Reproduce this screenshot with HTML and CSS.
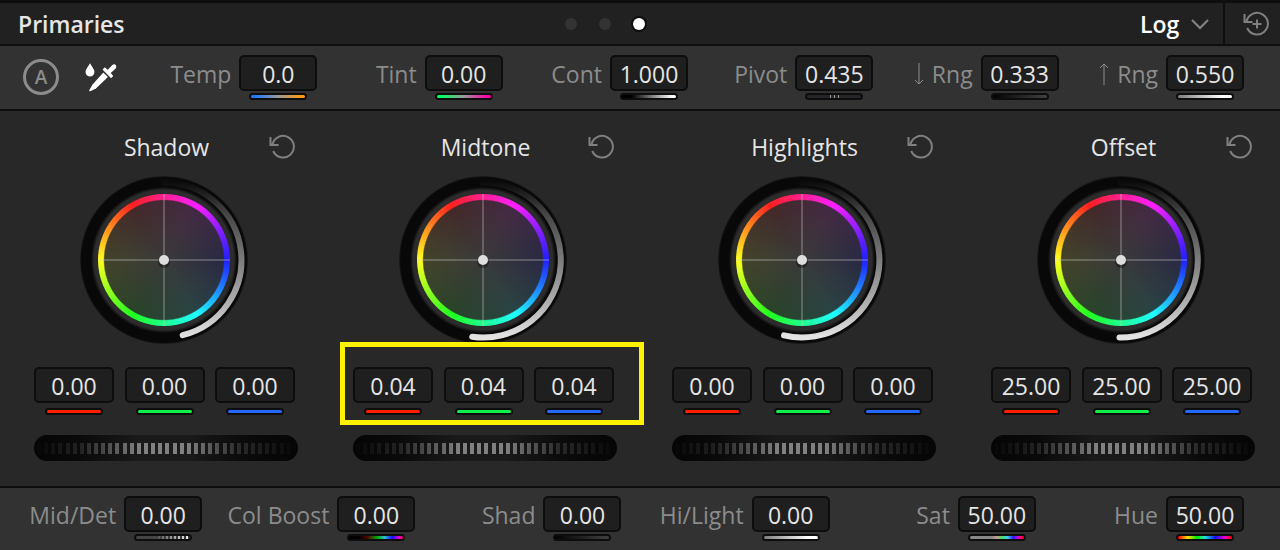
FILE: index.html
```html
<!DOCTYPE html>
<html lang="en">
<head>
  <meta charset="UTF-8" />
  <meta name="viewport" content="width=device-width, initial-scale=1" />
  <title>Primaries</title>
  <link rel="stylesheet" href="styles.css">
</head>
<body>
  <!-- Shared icons -->
  <svg class="defs" width="0" height="0" aria-hidden="true">
    <defs>
      <linearGradient id="arcFade" gradientUnits="userSpaceOnUse" x1="0" y1="6" x2="0" y2="162">
        <stop offset="0" stop-color="#0b0b0b" />
        <stop offset="0.2" stop-color="#444" />
        <stop offset="0.5" stop-color="#7c7c7c" />
        <stop offset="0.8" stop-color="#b4b4b4" />
        <stop offset="1" stop-color="#e4e4e4" />
      </linearGradient>
      <symbol id="reset" viewBox="0 0 26 26">
        <path d="M1.500 3v8h8M3.500 10.500A10.800 10.800 0 1 1 4.200 17" />
      </symbol>
      <symbol id="cross" viewBox="0 0 168 168">
        <path d="M84 18v132M18 84h132" stroke="#c8c8c8" stroke-opacity=".6" />
        <circle cx="84" cy="86" r="6" fill="#000" fill-opacity=".35" />
        <circle cx="84" cy="84" r="5" fill="#dedede" />
      </symbol>
    </defs>
  </svg>

  <header class="topbar">
    <h1>Primaries</h1>
    <nav class="dots">
      <button type="button" aria-label="Page 1"></button>
      <button type="button" aria-label="Page 2"></button>
      <button type="button" class="active" aria-label="Page 3"></button>
    </nav>
    <div class="topbar-right">
      <div class="mode">
        <select aria-label="Mode"><option>Log</option></select>
        <svg width="20" height="12" viewBox="0 0 20 12"><path d="M2 2l8 8 8-8" /></svg>
      </div>
      <button type="button" class="reset-all" aria-label="Reset all">
        <svg class="icon" width="26" height="26" viewBox="0 0 26 26"><use href="#reset" /><path d="M14 8.500v9M9.500 13h9" /></svg>
      </button>
    </div>
  </header>

  <section class="bar">
    <div class="tools">
      <button type="button" class="auto">A</button>
      <button type="button" class="picker" aria-label="Color picker">
        <svg width="34" height="32" viewBox="0 0 34 32">
          <path d="M6 2C8 6 10.500 8 10.500 11a4.500 4.500 0 0 1-9 0C1.500 8 4 6 6 2z" />
          <path d="M18.500 8.500l2.300-2.300 3 2.600 4.200-4.600c2.600-2.600 6 .8 3.500 3.500l-4.700 4.300 2.500 3-2.300 2.200z" />
          <path d="M19.300 11.500l4.700 4.600L12 27.500l-6 3-1-1L8.500 23.500z" />
        </svg>
      </button>
    </div>
    <div class="fields">
      <div class="field"><label for="temp">Temp</label><div class="value"><input id="temp" type="text" value="0.0"><span class="swatch temp"></span></div></div>
      <div class="field"><label for="tint">Tint</label><div class="value"><input id="tint" type="text" value="0.00"><span class="swatch tint"></span></div></div>
      <div class="field"><label for="cont">Cont</label><div class="value"><input id="cont" type="text" value="1.000"><span class="swatch cont"></span></div></div>
      <div class="field"><label for="pivot">Pivot</label><div class="value"><input id="pivot" type="text" value="0.435"><span class="swatch pivot"></span></div></div>
      <div class="field">
        <label for="lowRng"><svg width="12" height="24" viewBox="0 0 12 24"><path d="M6 1v21M2 18l4 4 4-4" /></svg>Rng</label>
        <div class="value"><input id="lowRng" type="text" value="0.333"><span class="swatch dark"></span></div>
      </div>
      <div class="field">
        <label for="highRng"><svg width="12" height="24" viewBox="0 0 12 24"><path d="M6 23V2M2 6l4-4 4 4" /></svg>Rng</label>
        <div class="value"><input id="highRng" type="text" value="0.550"><span class="swatch light"></span></div>
      </div>
    </div>
  </section>

  <main class="wheels">
    <section class="wheel-col">
      <div class="wheel-head">
        <h2>Shadow</h2>
        <button type="button" aria-label="Reset Shadow"><svg class="icon" width="26" height="26"><use href="#reset" /></svg></button>
      </div>
      <div class="wheel">
        <div class="hue"></div>
        <svg width="168" height="168" viewBox="0 0 168 168">
          <path class="arc" d="M84 6.500A77.500 77.500 0 0 1 102.700 159.200" />
          <use href="#cross" />
        </svg>
      </div>
      <div class="rgb">
        <div class="value"><input type="text" value="0.00" aria-label="Shadow red"><span class="swatch red"></span></div>
        <div class="value"><input type="text" value="0.00" aria-label="Shadow green"><span class="swatch green"></span></div>
        <div class="value"><input type="text" value="0.00" aria-label="Shadow blue"><span class="swatch blue"></span></div>
      </div>
      <input class="jog" type="range" aria-label="Shadow master">
    </section>

    <section class="wheel-col">
      <div class="wheel-head">
        <h2>Midtone</h2>
        <button type="button" aria-label="Reset Midtone"><svg class="icon" width="26" height="26"><use href="#reset" /></svg></button>
      </div>
      <div class="wheel">
        <div class="hue"></div>
        <svg width="168" height="168" viewBox="0 0 168 168">
          <path class="arc" d="M84 6.500A77.500 77.500 0 1 1 73.200 160.700" />
          <use href="#cross" />
        </svg>
      </div>
      <div class="rgb marked">
        <div class="value"><input type="text" value="0.04" aria-label="Midtone red"><span class="swatch red"></span></div>
        <div class="value"><input type="text" value="0.04" aria-label="Midtone green"><span class="swatch green"></span></div>
        <div class="value"><input type="text" value="0.04" aria-label="Midtone blue"><span class="swatch blue"></span></div>
      </div>
      <input class="jog" type="range" aria-label="Midtone master">
    </section>

    <section class="wheel-col">
      <div class="wheel-head">
        <h2>Highlights</h2>
        <button type="button" aria-label="Reset Highlights"><svg class="icon" width="26" height="26"><use href="#reset" /></svg></button>
      </div>
      <div class="wheel">
        <div class="hue"></div>
        <svg width="168" height="168" viewBox="0 0 168 168">
          <path class="arc" d="M84 6.500A77.500 77.500 0 1 1 66 159.400" />
          <use href="#cross" />
        </svg>
      </div>
      <div class="rgb">
        <div class="value"><input type="text" value="0.00" aria-label="Highlights red"><span class="swatch red"></span></div>
        <div class="value"><input type="text" value="0.00" aria-label="Highlights green"><span class="swatch green"></span></div>
        <div class="value"><input type="text" value="0.00" aria-label="Highlights blue"><span class="swatch blue"></span></div>
      </div>
      <input class="jog" type="range" aria-label="Highlights master">
    </section>

    <section class="wheel-col">
      <div class="wheel-head">
        <h2>Offset</h2>
        <button type="button" aria-label="Reset Offset"><svg class="icon" width="26" height="26"><use href="#reset" /></svg></button>
      </div>
      <div class="wheel">
        <div class="hue"></div>
        <svg width="168" height="168" viewBox="0 0 168 168">
          <path class="arc" d="M84 6.500A77.500 77.500 0 1 1 82.500 161.500" />
          <use href="#cross" />
        </svg>
      </div>
      <div class="rgb">
        <div class="value"><input type="text" value="25.00" aria-label="Offset red"><span class="swatch red"></span></div>
        <div class="value"><input type="text" value="25.00" aria-label="Offset green"><span class="swatch green"></span></div>
        <div class="value"><input type="text" value="25.00" aria-label="Offset blue"><span class="swatch blue"></span></div>
      </div>
      <input class="jog" type="range" aria-label="Offset master">
    </section>
  </main>

  <footer class="bar bottom">
    <div class="fields">
      <div class="field"><label for="midDet">Mid/Det</label><div class="value"><input id="midDet" type="text" value="0.00"><span class="swatch detail"></span></div></div>
      <div class="field"><label for="colBoost">Col Boost</label><div class="value"><input id="colBoost" type="text" value="0.00"><span class="swatch boost"></span></div></div>
      <div class="field"><label for="shad">Shad</label><div class="value"><input id="shad" type="text" value="0.00"><span class="swatch dark"></span></div></div>
      <div class="field"><label for="hiLight">Hi/Light</label><div class="value"><input id="hiLight" type="text" value="0.00"><span class="swatch light"></span></div></div>
      <div class="field"><label for="sat">Sat</label><div class="value"><input id="sat" type="text" value="50.00"><span class="swatch sat"></span></div></div>
      <div class="field"><label for="hue">Hue</label><div class="value"><input id="hue" type="text" value="50.00"><span class="swatch rainbow"></span></div></div>
    </div>
  </footer>
</body>
</html>
```
FILE: styles.css
```css
* {
  box-sizing: border-box;
}
body {
  margin: 0;
  min-height: 100vh;
  display: flex;
  flex-direction: column;
  background: #282828;
  color: #e6e6e6;
  font-family: "Open Sans", "Noto Sans", sans-serif;
  font-size: 23px;
  line-height: 32px;
}
h1, h2 {
  margin: 0;
  font-size: 23px;
}
button, input, select {
  margin: 0;
  padding: 0;
  border: none;
  background: none;
  color: inherit;
  font: inherit;
}
button {
  cursor: pointer;
}
svg {
  display: block;
  fill: none;
}
.defs {
  position: absolute;
}
.icon {
  stroke: #808080;
  stroke-width: 2;
}

/* Top bar */
.topbar {
  display: grid;
  grid-template-columns: 565fr 80px 635fr;
  align-items: center;
  height: 46px;
  border-top: 3px solid #0e0e0e;
  border-bottom: 2px solid #0e0e0e;
  background: #212121;
}
.topbar h1 {
  padding: 1px 0 0 18px;
  font-weight: 600;
}
.dots {
  display: flex;
  justify-content: space-between;
}
.dots button {
  width: 12px;
  height: 12px;
  border-radius: 50%;
  background: #333;
}
.dots .active {
  background: #fff;
  box-shadow: 0 0 0 2px #0e0e0e;
}
.topbar-right {
  display: flex;
  justify-content: flex-end;
  align-self: stretch;
}
.mode {
  display: flex;
  align-items: center;
  gap: 10px;
  padding-right: 13px;
}
.mode select {
  appearance: none;
  color: #fff;
  font-weight: 600;
}
.mode svg {
  stroke: #858585;
  stroke-width: 2;
}
.reset-all {
  width: 57px;
  padding-left: 18px;
  border-left: 2px solid #0e0e0e;
}

/* Parameter bars */
.bar {
  display: flex;
  height: 65px;
  padding: 9px 36px 0 0;
  border-bottom: 2px solid #0e0e0e;
  background: #323232;
}
.bottom {
  height: 64px;
  padding-top: 8px;
  border-top: 2px solid #0e0e0e;
  border-bottom: none;
}
.tools {
  display: flex;
  align-items: center;
  gap: 25px;
  width: 132px;
  height: 44px;
  padding-left: 23px;
}
.auto {
  width: 36px;
  height: 36px;
  border: 3px solid #8c8c8c;
  border-radius: 50%;
  color: #8c8c8c;
  font-size: 19px;
  font-weight: 600;
  line-height: 28px;
}
.picker svg {
  fill: #fff;
  stroke: #1a1a1a;
  stroke-width: 1;
  paint-order: stroke;
}
.fields {
  flex: 1;
  display: grid;
  grid-template-columns: repeat(6, 1fr);
}
.bottom .fields {
  grid-template-columns: 202fr 213fr 206fr 208fr 206fr 208fr;
}
.field {
  display: flex;
  justify-content: flex-end;
  gap: 8px;
}
.field label {
  display: flex;
  align-items: center;
  gap: 7px;
  height: 37px;
  color: #8c8c8c;
}
.field label svg {
  stroke: #8c8c8c;
}
.value {
  display: flex;
  flex-direction: column;
  align-items: center;
  gap: 2px;
}
.value input {
  width: 78px;
  height: 36px;
  padding-top: 1px;
  border: 2px solid #0d0d0d;
  border-radius: 5px;
  background: #1f1f1f;
  text-align: center;
}
.swatch {
  width: 58px;
  height: 7px;
  border: 2px solid #0d0d0d;
  border-radius: 4px;
  background-origin: border-box;
}
.temp { background-image: linear-gradient(90deg, #1f78ff 10%, #999 50%, #ff9a10 90%); }
.tint { background-image: linear-gradient(90deg, #00ff60 10%, #999 50%, #ff00a8 90%); }
.cont { background-image: linear-gradient(90deg, #000 20%, #fff 90%); }
.pivot { background: repeating-linear-gradient(90deg, #999 0 1px, #25252a 1px 4px) center / 9px 100% no-repeat #25252a; }
.dark { background-image: linear-gradient(90deg, #000, #444); }
.light { background-image: linear-gradient(90deg, #777, #fff 80%); }
.detail { background-image: linear-gradient(90deg, #444 35%, transparent), repeating-linear-gradient(90deg, #fff 0 2px, #333 2px 4px); }
.boost { background-image: linear-gradient(90deg, #000 20%, #500 35%, #0a0 52%, #3bc 65%, #11f 78%, #e0c 90%, #f00); }
.sat { background-image: linear-gradient(90deg, #888 40%, #c98 50%, #4d6 58%, #4ce 68%, #22f 78%, #e0c 88%, #f00 96%); }
.rainbow { background-image: linear-gradient(90deg, #f00 4%, #fd0 20%, #0e0 36%, #2dd 50%, #11f 68%, #e0c 84%, #f00 96%); }
.red { background: #ff1e00; }
.green { background: #0ef048; }
.blue { background: #2468ff; }

/* Color wheels */
.wheels {
  flex: 1;
  display: grid;
  grid-template-columns: repeat(4, 1fr);
  padding: 19px 4px 0 0;
}
.wheel-col {
  display: flex;
  flex-direction: column;
  padding: 0 24px 0 34px;
}
.wheel-head {
  display: grid;
  grid-template-columns: 1fr auto 1fr;
  align-items: center;
  height: 34px;
}
.wheel-head h2 {
  grid-column: 2;
  padding-left: 4px;
  font-weight: 400;
}
.wheel-head button {
  justify-self: end;
}
.wheel {
  display: grid;
  place-items: center;
  align-self: center;
  width: 168px;
  height: 168px;
  margin: 12px 2px 0 0;
  border-radius: 50%;
  background: radial-gradient(circle closest-side, #2c2c2c 83%, #080808 87%, #080808 98%, #1c1c1c 100%);
}
.wheel > * {
  grid-area: 1 / 1;
}
.hue {
  width: 132px;
  height: 132px;
  border-radius: 50%;
  background:
    radial-gradient(circle closest-side, #3a3a3a, rgba(42, 42, 42, 0.88) 90%, transparent 92%),
    conic-gradient(#ff1f90, #ff1fff 30deg, #8f1fff 60deg, #1f1fff 90deg, #1f8fff 120deg, #1fffff 150deg, #1fff8f 180deg, #1fff1f 210deg, #8fff1f 240deg, #ffff1f 270deg, #ff8f1f 300deg, #ff1f1f 330deg, #ff1f90);
}
.arc {
  stroke: url(#arcFade);
  stroke-width: 6;
  stroke-linecap: round;
}
.rgb {
  position: relative;
  display: flex;
  justify-content: space-between;
  margin-top: 23px;
}
.rgb .value {
  gap: 5px;
}
.rgb .value input {
  width: 80px;
}
.marked::after {
  content: "";
  position: absolute;
  inset: -25px -30px -10px -13px;
  border: 5px solid #fff200;
  pointer-events: none;
}
.jog {
  appearance: none;
  width: calc(100% + 3px);
  height: 26px;
  margin-top: 20px;
  border-radius: 13px;
  background:
    linear-gradient(90deg, #050505, rgba(5, 5, 5, 0.75) 18%, transparent 40%, transparent 58%, rgba(5, 5, 5, 0.7) 78%, #050505),
    repeating-linear-gradient(90deg, transparent 0 3px, #808080 3px 7px, transparent 7px calc(100% / 37)) center / 100% 11px no-repeat,
    #1a1a1a;
}
.jog::-webkit-slider-thumb {
  appearance: none;
  width: 26px;
  height: 26px;
  background: none;
}
```
